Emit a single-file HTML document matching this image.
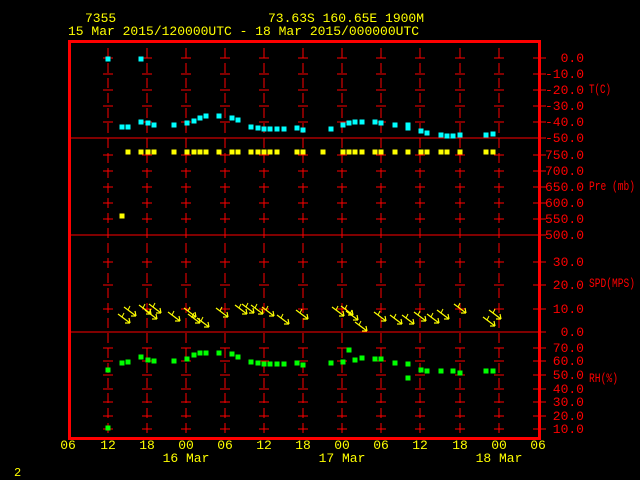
<!DOCTYPE html>
<html><head><meta charset="utf-8"><style>
html,body{margin:0;padding:0;background:#000;width:640px;height:480px;overflow:hidden}
svg{display:block}
text{font-family:"Liberation Mono",monospace;font-size:13px}
.y{fill:#ffff00}.r{fill:#ff0000}
</style></head><body>
<svg id="s" width="640" height="480" xmlns="http://www.w3.org/2000/svg">
<rect width="640" height="480" fill="#000"/>
<g id="g"></g>
<text class="y" x="85" y="22">7355</text>
<text class="y" x="268" y="22">73.63S  160.65E  1900M</text>
<text class="y" x="68" y="35">15 Mar 2015/120000UTC - 18 Mar 2015/000000UTC</text>
<g class="r" text-anchor="end" style="font-size:10px">
<text x="584" y="62">0.0</text><text x="584" y="78">-10.0</text><text x="584" y="94">-20.0</text><text x="584" y="110">-30.0</text><text x="584" y="126">-40.0</text><text x="584" y="142">-50.0</text>
<text x="584" y="159">750.0</text><text x="584" y="175">700.0</text><text x="584" y="191">650.0</text><text x="584" y="207">600.0</text><text x="584" y="223">550.0</text><text x="584" y="239">500.0</text>
<text x="584" y="266">30.0</text><text x="584" y="289">20.0</text><text x="584" y="313">10.0</text><text x="584" y="336">0.0</text>
<text x="584" y="352">70.0</text><text x="584" y="365">60.0</text><text x="584" y="379">50.0</text><text x="584" y="393">40.0</text><text x="584" y="406">30.0</text><text x="584" y="420">20.0</text><text x="584" y="433">10.0</text>
</g>
<g class="r" style="font-size:9px">
<text x="589" y="93" textLength="22" lengthAdjust="spacingAndGlyphs">T(C)</text>
<text x="589" y="190" textLength="46" lengthAdjust="spacingAndGlyphs">Pre (mb)</text>
<text x="589" y="287" textLength="46" lengthAdjust="spacingAndGlyphs">SPD(MPS)</text>
<text x="589" y="382" textLength="29" lengthAdjust="spacingAndGlyphs">RH(%)</text>
</g>
<g class="y" text-anchor="middle" style="font-size:12px">
<text x="68" y="449">06</text><text x="108" y="449">12</text><text x="147" y="449">18</text><text x="186" y="449">00</text><text x="225" y="449">06</text><text x="264" y="449">12</text><text x="303" y="449">18</text><text x="342" y="449">00</text><text x="381" y="449">06</text><text x="420" y="449">12</text><text x="460" y="449">18</text><text x="499" y="449">00</text><text x="538" y="449">06</text>
<text x="186" y="462">16 Mar</text><text x="342" y="462">17 Mar</text><text x="499" y="462">18 Mar</text>
</g>
<text class="y" x="14" y="476" style="font-size:12px">2</text>
</svg>
<script>
var g=document.getElementById('g'),h='';
function L(a,b,c,d,col,w,da){h+='<line x1="'+a+'" y1="'+b+'" x2="'+c+'" y2="'+d+'" stroke="'+col+'" stroke-width="'+(w||1)+'"'+(da?' stroke-dasharray="'+da+'"':'')+'/>';}
function R(x,y,c){h+='<rect x="'+(x-2.5)+'" y="'+(y-2.5)+'" width="5" height="5" fill="'+c+'"/>';}
var xs=[108,147,186,225,264,303,342,381,420,460,499];
var ys=[58,74,90,106,122,155,171,187,203,219,262,285,309,348,361,375,389,402,416,429];
xs.forEach(function(x){L(x,48,x,438,'#f00',1,'10,5');ys.forEach(function(y){L(x-5,y,x+5,y,'#f00',1);});});
ys.concat([138,235,332]).forEach(function(y){L(533,y,546,y,'#f00',1);});
L(70,138,540,138,'#f00',1);L(70,235,540,235,'#f00',1);L(70,332,540,332,'#f00',1);
h+='<rect x="69.5" y="41.5" width="470" height="397" fill="none" stroke="#f00" stroke-width="3"/>';
[[108,59],[141,59],[122,127],[128,127],[141,122],[148,123],[154,125],[174,125],[187,123],[194,121],[200,118],[206,116],[219,116],[232,118],[238,120],[251,127],[258,128],[264,129],[270,129],[277,129],[284,129],[297,128],[303,130],[331,129],[343,125],[349,123],[355,122],[362,122],[375,122],[381,123],[395,125],[408,125],[408,128],[421,131],[427,133],[441,135],[447,136],[453,136],[460,135],[486,135],[493,134]].forEach(function(p){R(p[0],p[1],'#00ffff');});
[128,141,148,154,174,187,194,200,206,219,232,238,251,258,264,270,277,297,303,323,343,349,355,362,375,381,395,408,421,427,441,447,460,486,493].forEach(function(x){R(x,152,'#ffff00');});
R(122,216,'#ffff00');
[[108,370],[122,363],[128,362],[141,357],[148,360],[154,361],[174,361],[187,359],[194,355],[200,353],[206,353],[219,353],[232,354],[238,357],[251,362],[258,363],[264,364],[270,364],[277,364],[284,364],[297,363],[303,365],[331,363],[343,362],[349,350],[355,360],[362,358],[375,359],[381,359],[395,363],[408,364],[408,378],[421,370],[427,371],[441,371],[453,371],[460,373],[486,371],[493,371],[108,428]].forEach(function(p){R(p[0],p[1],'#00ff00');});
[[130,323],[136,316],[151,314],[157,319],[161,313],[180,321],[196,317],[200,323],[209,327],[228,317],[247,314],[254,313],[263,314],[274,316],[289,324],[308,319],[344,316],[353,315],[358,320],[367,331],[386,321],[402,324],[414,324],[426,321],[439,323],[449,319],[466,313],[495,326],[501,319]].forEach(function(p){var x=p[0],y=p[1];L(x-12,y-9,x,y,'#ff0',1.2);L(x,y,x-5,y,'#ff0',1.2);L(x,y,x-1,y-5,'#ff0',1.2);L(x-8,y-6,x-6,y-10,'#ff0',1);});
g.innerHTML=h;
</script>
</body></html>
